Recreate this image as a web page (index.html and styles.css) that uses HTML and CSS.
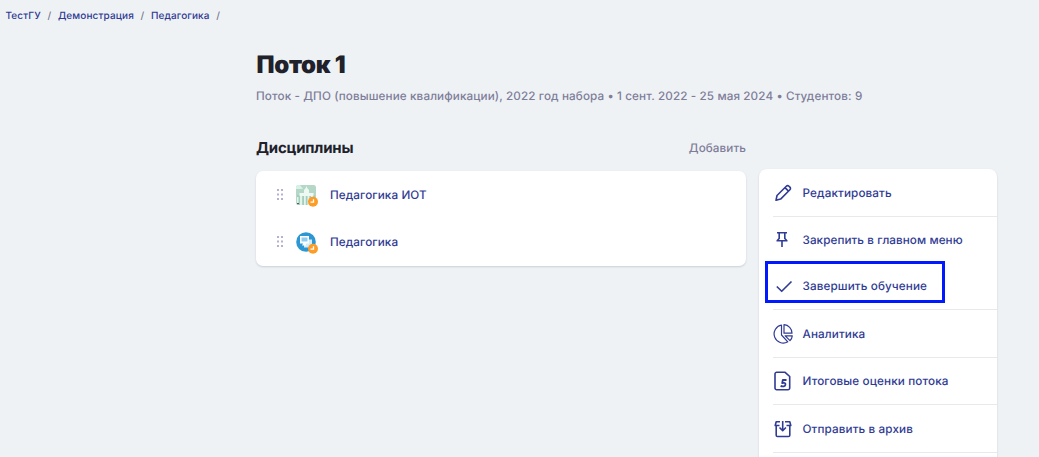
FILE: index.html
```html
<!DOCTYPE html>
<html lang="ru">
<head>
<meta charset="utf-8">
<title>Поток 1</title>
<link rel="stylesheet" href="styles.css">
</head>
<body>
<nav class="crumbs"><a>ТестГУ</a><i>/</i><a>Демонстрация</a><i>/</i><a>Педагогика</a><i>/</i></nav>
<main class="page">
  <header class="head">
    <h1 class="title">Поток 1</h1>
    <p class="meta">Поток - ДПО (повышение квалификации), 2022 год набора • 1 сент. 2022 - 25 мая 2024 • Студентов: 9</p>
  </header>
  <div class="columns">
    <section class="disciplines">
      <div class="section-head"><h2>Дисциплины</h2><a class="add">Добавить</a></div>
      <div class="list">
        <div class="item">
          <svg class="grip" width="6" height="11" viewBox="0 0 6 11"><path d="M0 0h2v2H0zM4 0h2v2H4zM0 4.500h2v2H0zM4 4.500h2v2H4zM0 9h2v2H0zM4 9h2v2H4z"/></svg>
          <svg class="pic" width="22" height="22" viewBox="0 0 22 22">
            <rect width="20" height="20" rx="2.500" fill="#b4d7c8"/>
            <path d="M0 2.500Q0 0 2.500 0H4l3 4H0z" fill="#d9f1e6"/>
            <path d="M1 10h18v10H1z" fill="#a5cdbc"/>
            <path d="M10.500 1l.7 2 1.800 2v3h4.500v3h-14V8H8V5l1.800-2z" fill="#eef9f4"/>
            <path d="M1 12h1.500v6H1zM4 11h2.200v9H4zM8 11h1.800v9H8zM11.500 11h1.800v9h-1.800zM15 11h2v5h-2z" fill="#e2f4ec"/>
            <path d="M1 18h2v1H1z" fill="#4c6058"/>
            <circle cx="17" cy="16.800" r="5" fill="#fd9d27"/><path d="M17.500 14.200v3H14.500" fill="none" stroke="#fff" stroke-width="1.300"/>
          </svg>
          <span>Педагогика ИОТ</span>
        </div>
        <div class="item">
          <svg class="grip" width="6" height="11" viewBox="0 0 6 11"><path d="M0 0h2v2H0zM4 0h2v2H4zM0 4.500h2v2H0zM4 4.500h2v2H4zM0 9h2v2H0zM4 9h2v2H4z"/></svg>
          <svg class="pic" width="22" height="22" viewBox="0 0 22 22">
            <circle cx="10" cy="10" r="9.800" fill="#2c97d3"/>
            <path d="M8 7.500h8v6h-2l1 2H8z" fill="#d3edfb"/>
            <path d="M4 4h9v7.500H9.500l1 2H6l1-2H4z" fill="#fff"/><path d="M5.500 5.500h6v4h-6z" fill="#8ccdf0"/>
            <circle cx="17" cy="16.800" r="5" fill="#fd9d27"/><path d="M17.500 14.200v3H14.500" fill="none" stroke="#fff" stroke-width="1.300"/>
          </svg>
          <span>Педагогика</span>
        </div>
      </div>
    </section>
    <aside class="menu">
      <div class="row line">
        <svg class="icon" viewBox="0 0 20 20"><path d="M3 17.300l1-4.800L13.300 3.200a1.900 1.900 0 0 1 2.700 0l.9.9a1.900 1.900 0 0 1 0 2.700L7.600 16.100zM12 4.600l3.500 3.500"/></svg>
        <span>Редактировать</span></div>
      <div class="row pin">
        <svg class="icon" viewBox="0 0 20 20"><path d="M4 2.700h10M6.200 2.700v5.800L4.300 10.500M11.800 2.700v5.800l1.900 2M3.500 10.700h11M9 10.700v6.300"/></svg>
        <span>Закрепить в главном меню</span></div>
      <div class="row finish line">
        <svg class="icon" viewBox="0 0 20 20"><path d="M3.800 10.500l4.900 4.800L18.500 5.500"/></svg>
        <span>Завершить обучение</span></div>
      <div class="row line">
        <svg class="icon thin" viewBox="0 0 20 20"><path d="M8.500 1V11l6.300 6.800A9.100 9.100 0 1 1 8.500 1zM11 .700a8.500 8.500 0 0 1 8 8.500H11zM12.200 11.800h7.100a8 8 0 0 1-2.300 4.900z"/></svg>
        <span>Аналитика</span></div>
      <div class="row grades line">
        <svg class="icon" viewBox="0 0 20 20"><path d="M3.800 1.300h8.300L16.700 5.500v11.500a1.700 1.700 0 0 1-1.700 1.700H3.800A1.700 1.700 0 0 1 2 17V3A1.700 1.700 0 0 1 3.800 1.300z"/><path class="five" d="M13.500 9H9.800l-.6 3.100c2.100-.7 3.600-.1 3.200 1.700-.3 1.700-2.800 2.100-4.800 1.100"/></svg>
        <span>Итоговые оценки потока</span></div>
      <div class="row line">
        <svg class="icon" viewBox="0 0 20 20"><path d="M7 2.700H3.200L2.200 6.500H6.500M12 2.700h4.800l1 3.800h-4.300M3.200 6.500v9.700a1.300 1.300 0 0 0 1.300 1.300h11a1.300 1.300 0 0 0 1.300-1.300V6.500M9.700 2v9.500M6.500 8.500l3.200 3.200 3.200-3.200"/></svg>
        <span>Отправить в архив</span></div>
    </aside>
  </div>
</main>
</body>
</html>
```
FILE: styles.css
```css
*, *::before { box-sizing: border-box; }
body { margin: 0; width: 1039px; height: 457px; overflow: hidden; background: #eef2f5; color: #20212a; font-family: Inter, "Noto Sans", sans-serif; font-size: 11.7px; text-rendering: geometricPrecision; }
.crumbs { display: flex; height: 31px; padding: 1px 0 0 5.500px; align-items: center; font-size: 10px; font-weight: 500; color: #303b93; white-space: nowrap; letter-spacing: .12px; }
.crumbs i { width: 17px; text-align: center; font-style: normal; color: #77768f; }
.page { padding-left: 256px; }
.head { height: 103px; padding-top: 18px; }
.title { margin: 0 0 0 .5px; font-size: 24px; line-height: 32px; font-weight: 900; letter-spacing: -.3px; }
.meta { margin: 7px 0 0; line-height: 16px; font-weight: 500; color: #7f7d99; white-space: nowrap; letter-spacing: .11px; }
.columns { display: flex; gap: 13px; align-items: flex-start; }
.disciplines { width: 490px; }
.section-head { display: flex; height: 37px; padding-top: 4px; justify-content: space-between; line-height: 20px; }
h2 { margin: 0; font-size: 15px; line-height: 20px; font-weight: 700; letter-spacing: -.2px; }
.add { color: #7f7d99; font-weight: 500; letter-spacing: .08px; }
.list { height: 95px; border-radius: 7px; background: #fff; box-shadow: 0 1px 2px rgba(40, 50, 80, .18); }
.item { display: flex; height: 47px; padding: 0 0 0 21px; align-items: center; color: #303b93; font-weight: 500; letter-spacing: .1px; }
.grip { fill: #b4b2d0; margin-right: 13px; }
.pic { margin: 3px 12px 0 0; }
.menu { width: 238px; height: 310px; margin-top: 35px; padding-left: 14px; border-radius: 8px; background: #fff; box-shadow: 0 1px 2px rgba(40, 50, 80, .18); color: #303b93; }
.row { display: flex; gap: 9.500px; height: 48px; align-items: center; font-weight: 500; letter-spacing: .12px; white-space: nowrap; }
.line { border-bottom: 1px solid #e8e9ec; }
.pin { height: 46px; letter-spacing: .07px; }
.finish { height: 47px; padding-bottom: 1px; position: relative; }
.finish::before { content: ""; position: absolute; left: -8px; top: -2px; width: 180px; height: 42px; border: 3px solid #0019ff; }
.grades { height: 47px; }
.pin span, .grades span { padding-bottom: 1px; }
.icon { width: 20px; height: 20px; fill: none; stroke: #303b93; stroke-width: 1.6; stroke-linejoin: round; flex: none; }
.thin { stroke-width: 1.2; }
.five { stroke-width: 1.8; }
```
